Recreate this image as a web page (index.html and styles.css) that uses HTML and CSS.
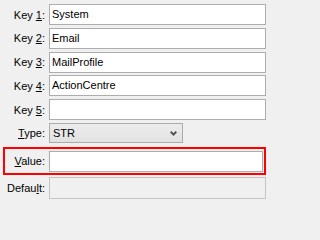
FILE: index.html
```html
<!DOCTYPE html>
<html>
<head>
<meta charset="utf-8">
<link rel="stylesheet" href="styles.css">
</head>
<body>
<div class="form">
  <div class="row">
    <label class="lbl">Key <u>1</u>:</label>
    <div class="field">System</div>
  </div>
  <div class="row">
    <label class="lbl">Key <u>2</u>:</label>
    <div class="field">Email</div>
  </div>
  <div class="row">
    <label class="lbl">Key <u>3</u>:</label>
    <div class="field">MailProfile</div>
  </div>
  <div class="row">
    <label class="lbl">Key <u>4</u>:</label>
    <div class="field">ActionCentre</div>
  </div>
  <div class="row">
    <label class="lbl">Key <u>5</u>:</label>
    <div class="field"></div>
  </div>
  <div class="row">
    <label class="lbl"><u>T</u>ype:</label>
    <div class="select">
      <span>STR</span>
      <svg class="chev" width="7" height="5" viewBox="0 0 7 5"><path d="M0.7 0.7 L3.5 3.5 L6.3 0.7" fill="none" stroke="#555" stroke-width="2"/></svg>
    </div>
  </div>
  <div class="highlight">
    <div class="row inner">
      <label class="lbl lbl-in"><u>V</u>alue:</label>
      <div class="field"></div>
    </div>
  </div>
  <div class="row last">
    <label class="lbl">Defau<u>l</u>t:</label>
    <div class="field disabled"></div>
  </div>
</div>
</body>
</html>
```
FILE: styles.css
```css
html, body {
  margin: 0;
  padding: 0;
  background: #f0f0f0;
  width: 266px;
  height: 202px;
  overflow: hidden;
}
body {
  font-family: "Liberation Sans", Arial, sans-serif;
  font-size: 11px;
  color: #000;
}
.form {
  display: flex;
  flex-direction: column;
  gap: 2.8px;
  padding-top: 4px;
}
.row {
  display: flex;
  align-items: center;
  height: 21px;
}
.lbl {
  width: 45px;
  text-align: right;
  flex: none;
  white-space: nowrap;
}
.lbl u {
  text-decoration-thickness: 1px;
  text-underline-offset: 1px;
}
.field {
  box-sizing: border-box;
  flex: 1;
  height: 21px;
  margin-left: 4px;
  background: #fff;
  border: 1px solid #adadad;
  padding: 0 2px;
  line-height: 19px;
}
.field.disabled {
  background: #f0f0f0;
  border-color: #c4c4c4;
  height: 22px;
}
.select {
  box-sizing: border-box;
  width: 134px;
  height: 20px;
  margin-left: 4px;
  border: 1px solid #acacac;
  background: linear-gradient(#ececec, #e2e2e2);
  display: flex;
  align-items: center;
  padding: 0 5px 0 3px;
  align-self: flex-start;
}
.chev {
  margin-left: auto;
  margin-top: 2px;
}
.highlight {
  margin: 0.2px 0 0 3px;
  border: 2px solid #ff0000;
  padding: 2px 1px 1px 0;
}
.lbl-in {
  width: 40px;
}
.last {
  margin-top: -0.8px;
  height: 22px;
}
```
